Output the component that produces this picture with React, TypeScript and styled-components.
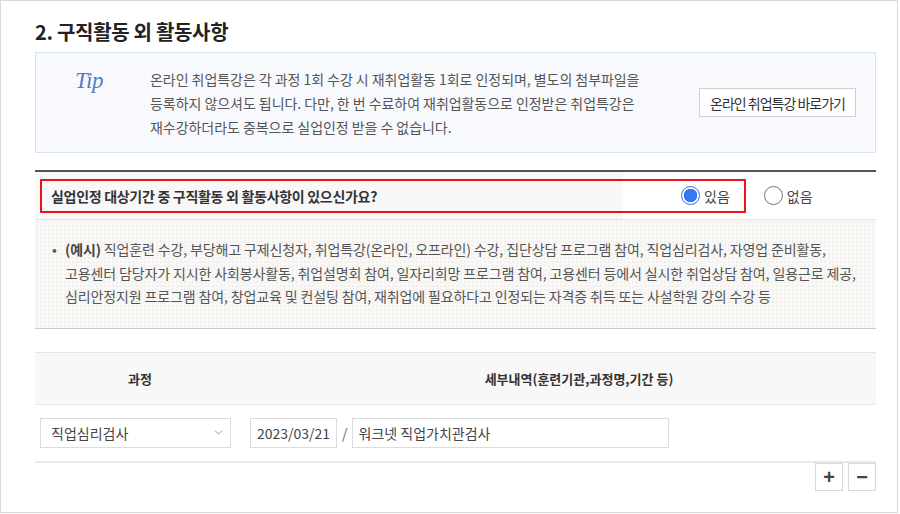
import React from 'react';
import styled, { createGlobalStyle } from 'styled-components';
import { ChevronDown } from 'lucide-react';

const GlobalStyle = createGlobalStyle`
  html, body { margin: 0; padding: 0; background: #fff; }
  body {
    font-family: 'Noto Sans CJK KR', 'Noto Sans', sans-serif;
    color: #555;
  }
  * { box-sizing: border-box; }
`;

const Frame = styled.div`
  width: 898px;
  height: 513px;
  border: 1px solid #d9d9d9;
  padding: 17px 21px 0 34px;
  background: #fff;
`;

const Title = styled.h2`
  margin: 0 0 6px;
  font-size: 20px;
  line-height: 28px;
  font-weight: 700;
  color: #222;
  letter-spacing: -0.3px;
`;

const TipBox = styled.div`
  display: flex;
  align-items: center;
  height: 101px;
  border: 1px solid #d6e4ef;
  background: #f7f9fd;
  margin-bottom: 17px;
`;

const TipMark = styled.div`
  align-self: flex-start;
  width: 114px;
  padding: 15px 0 0 39px;
  font-family: 'Liberation Serif', serif;
  font-style: italic;
  font-size: 23px;
  letter-spacing: -0.5px;
  color: #5679c4;
`;

const TipText = styled.p`
  flex: 1;
  margin: 0;
  font-size: 14px;
  line-height: 24px;
  color: #555;
  letter-spacing: -0.05px;
  white-space: nowrap;
`;

const LinkButton = styled.button`
  height: 29px;
  margin-right: 19px;
  padding: 0 10px;
  border: 1px solid #cfcfcf;
  background: #fff;
  font-family: inherit;
  font-size: 14px;
  letter-spacing: -1px;
  color: #333;
`;

const Section = styled.section`
  border-top: 2px solid #555;
`;

const QuestionRow = styled.div`
  position: relative;
  display: grid;
  grid-template-columns: 588px 1fr;
  height: 48px;
  border-bottom: 1px solid #e2e2e2;
`;

const QuestionCell = styled.div`
  display: flex;
  align-items: center;
  padding-left: 16px;
  background: #f8f8f8;
  font-size: 14px;
  font-weight: 700;
  letter-spacing: -0.3px;
  color: #333;
`;

const AnswerCell = styled.div`
  display: flex;
  align-items: center;
  padding-left: 58px;
`;

const RadioLabel = styled.label<{ gapAfter?: number }>`
  display: flex;
  align-items: center;
  gap: 4px;
  margin-right: ${(p) => p.gapAfter ?? 0}px;
  font-size: 14px;
  color: #444;
`;

const RadioDot = styled.span<{ checked: boolean }>`
  width: 19px;
  height: 19px;
  border-radius: 50%;
  border: 1px solid ${(p) => (p.checked ? '#2f6fe4' : '#767676')};
  background: ${(p) => (p.checked ? 'radial-gradient(circle, #3478f6 0 6.5px, #fff 7px)' : '#fff')};
`;

const Highlight = styled.div`
  position: absolute;
  left: 5px;
  top: 7px;
  width: 706px;
  height: 34px;
  border: 2px solid #e8141b;
  pointer-events: none;
`;

const ExampleBox = styled.div`
  display: flex;
  padding: 18px 10px 19px 17px;
  border-bottom: 1px solid #c9c9c9;
  background-color: #f9f8f6;
  background-image: radial-gradient(#f0efeb 0.7px, transparent 0.8px);
  background-size: 4px 4px;
  font-size: 14px;
  line-height: 23.5px;
  color: #555;
`;

const Bullet = styled.span`
  width: 13px;
  flex: none;
`;

const ExampleText = styled.p`
  margin: 0;
  white-space: nowrap;
  letter-spacing: -0.13px;
  b { color: #444; }
`;

const Table = styled.div`
  margin-top: 23px;
`;

const HeadRow = styled.div`
  display: grid;
  grid-template-columns: 210px 1fr;
  height: 53px;
  border-top: 1px solid #e6e6e6;
  border-bottom: 1px solid #e6e6e6;
  background: #f8f8f8;
`;

const HeadCell = styled.div<{ offset?: number }>`
  display: flex;
  align-items: center;
  justify-content: center;
  padding-left: ${(p) => p.offset ?? 0}px;
  font-size: 13px;
  font-weight: 700;
  color: #333;
`;

const BodyRow = styled.div`
  display: grid;
  grid-template-columns: 210px 1fr;
  height: 58px;
  border-bottom: 2px solid #e8e8e8;
`;

const BodyCell = styled.div`
  display: flex;
  align-items: center;
  padding-left: 5px;
`;

const SelectBox = styled.div`
  display: flex;
  align-items: center;
  justify-content: space-between;
  width: 191px;
  height: 30px;
  padding: 0 5px 0 10px;
  border: 1px solid #dcdcdc;
  font-size: 14px;
  color: #444;
`;

const Field = styled.input<{ w: number }>`
  width: ${(p) => p.w}px;
  height: 30px;
  padding: 0 6px;
  border: 1px solid #dcdcdc;
  font-family: inherit;
  font-size: 14px;
  color: #444;
  outline: none;
`;

const Slash = styled.span`
  margin: 0 4px 0 5px;
  font-size: 14px;
  color: #666;
`;

const Controls = styled.div`
  display: flex;
  justify-content: flex-end;
  gap: 5px;
`;

const CtrlButton = styled.button`
  width: 28px;
  height: 28px;
  padding: 0;
  border: 1px solid #d9d9d9;
  background: #fff;
  font-family: 'Liberation Sans', sans-serif;
  font-size: 20px;
  font-weight: 700;
  line-height: 1;
  color: #444;
`;

export default function App() {
  return (
    <>
      <GlobalStyle />
      <Frame>
        <Title>2. 구직활동 외 활동사항</Title>
        <TipBox>
          <TipMark>Tip</TipMark>
          <TipText>
            온라인 취업특강은 각 과정 1회 수강 시 재취업활동 1회로 인정되며, 별도의 첨부파일을
            <br />
            등록하지 않으셔도 됩니다. 다만, 한 번 수료하여 재취업활동으로 인정받은 취업특강은
            <br />
            재수강하더라도 중복으로 실업인정 받을 수 없습니다.
          </TipText>
          <LinkButton>온라인 취업특강 바로가기</LinkButton>
        </TipBox>

        <Section>
          <QuestionRow>
            <QuestionCell>실업인정 대상기간 중 구직활동 외 활동사항이 있으신가요?</QuestionCell>
            <AnswerCell>
              <RadioLabel gapAfter={34}>
                <RadioDot checked />
                있음
              </RadioLabel>
              <RadioLabel>
                <RadioDot checked={false} />
                없음
              </RadioLabel>
            </AnswerCell>
            <Highlight />
          </QuestionRow>

          <ExampleBox>
            <Bullet>•</Bullet>
            <ExampleText>
              <b>(예시)</b> 직업훈련 수강, 부당해고 구제신청자, 취업특강(온라인, 오프라인) 수강, 집단상담 프로그램 참여, 직업심리검사, 자영업 준비활동,
              <br />
              고용센터 담당자가 지시한 사회봉사활동, 취업설명회 참여, 일자리희망 프로그램 참여, 고용센터 등에서 실시한 취업상담 참여, 일용근로 제공,
              <br />
              심리안정지원 프로그램 참여, 창업교육 및 컨설팅 참여, 재취업에 필요하다고 인정되는 자격증 취득 또는 사설학원 강의 수강 등
            </ExampleText>
          </ExampleBox>
        </Section>

        <Table>
          <HeadRow>
            <HeadCell>과정</HeadCell>
            <HeadCell offset={37}>세부내역(훈련기관,과정명,기간 등)</HeadCell>
          </HeadRow>
          <BodyRow>
            <BodyCell>
              <SelectBox>
                직업심리검사
                <ChevronDown size={13} strokeWidth={1.4} color="#777" />
              </SelectBox>
            </BodyCell>
            <BodyCell>
              <Field w={87} defaultValue="2023/03/21" readOnly />
              <Slash>/</Slash>
              <Field w={317} defaultValue="워크넷 직업가치관검사" readOnly />
            </BodyCell>
          </BodyRow>
          <Controls>
            <CtrlButton>+</CtrlButton>
            <CtrlButton>−</CtrlButton>
          </Controls>
        </Table>
      </Frame>
    </>
  );
}
